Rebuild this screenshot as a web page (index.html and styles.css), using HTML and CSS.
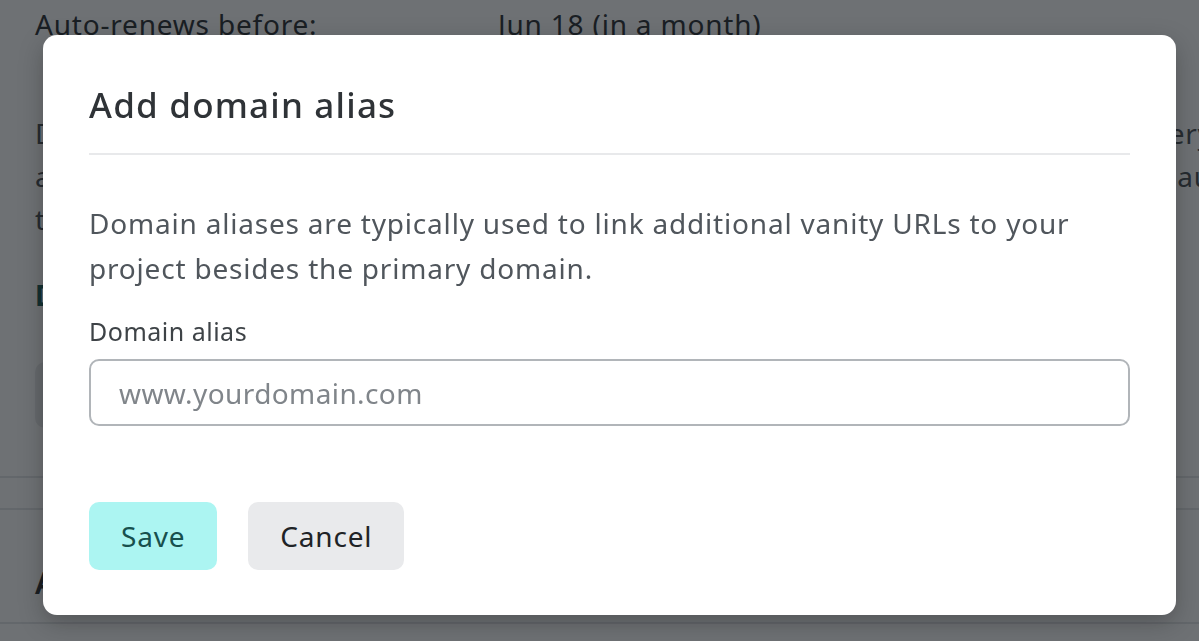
FILE: index.html
```html
<!DOCTYPE html>
<html lang="en">
<head>
    <meta charset="UTF-8">
    <meta name="viewport" content="width=device-width, initial-scale=1.0">
    <title>Add domain alias</title>
    <link rel="stylesheet" href="styles.css">
</head>
<body>
    <main class="page">
        <div class="info-row">
            <span class="info-label">Auto-renews before:</span>
            <span class="info-value">Jun 18 (in a month)</span>
        </div>

        <p class="page-text">
            <span class="page-line">Domain aliases are typically used to link additional vanity URLs to your project. Every alias will get its own certificate</span>
            <span class="page-line">as long as the domain keeps pointing to this project, and certificates get renewed automatically, without any action</span>
            <span class="page-line">to keep the alias secure.</span>
        </p>

        <h3 class="page-heading">Domain aliases</h3>
        <div class="page-box"></div>

        <div class="page-divider"></div>
        <div class="page-divider"></div>

        <h3 class="page-subheading">Advanced</h3>
        <div class="page-divider page-divider-last"></div>
    </main>

    <div class="overlay"></div>

    <!-- Add alias dialog -->
    <div class="modal" role="dialog" aria-labelledby="modal-title">
        <h2 class="modal-title" id="modal-title">Add domain alias</h2>
        <p class="modal-text">
            Domain aliases are typically used to link additional vanity URLs to your<br>
            project besides the primary domain.
        </p>
        <label class="field-label" for="alias">Domain alias</label>
        <input class="field-input" id="alias" type="text" placeholder="www.yourdomain.com">
        <div class="modal-actions">
            <button class="btn btn-primary" type="button">Save</button>
            <button class="btn btn-secondary" type="button">Cancel</button>
        </div>
    </div>
</body>
</html>
```

FILE: styles.css
```css
:root {
    --color-text: #2f3337;
    --color-muted: #50565c;
    --color-border: #b1b5b9;
    --color-accent: #acf5f2;
    --color-accent-text: #17504e;
    --color-neutral: #e9eaec;
}

* {
    box-sizing: border-box;
}

body {
    margin: 0;
    font-family: 'Noto Sans', 'Open Sans', sans-serif;
    letter-spacing: 0.8px;
    background-color: #ffffff;
    color: var(--color-text);
    overflow: hidden;
}

/* Page behind the dialog */
.page {
    padding: 0 0 0 35px;
    margin-top: 2px;
    overflow: hidden;
}

.info-row {
    display: grid;
    grid-template-columns: 463px 1fr;
    font-size: 28px;
    line-height: 44px;
}

.page-text {
    margin: 66px 0 0;
    font-size: 28px;
    line-height: 43px;
    color: #4b5157;
    white-space: nowrap;
    overflow: hidden;
}

.page-line {
    display: block;
}

.page-heading {
    margin: 34px 0 0;
    font-size: 28px;
    line-height: 40px;
    font-weight: 700;
    color: #1d5c59;
}

.page-box {
    margin-top: 47px;
    height: 66px;
    width: 300px;
    border-radius: 10px;
    background-color: #e9eaec;
}

.page-divider {
    margin: 48px 0 0 -35px;
    height: 2px;
    background-color: #e4e6e8;
}

.page-divider + .page-divider {
    margin-top: 30px;
}

.page-divider-last {
    margin-top: 19px;
}

.page-subheading {
    margin: 53px 0 0;
    font-size: 30px;
    line-height: 40px;
    font-weight: 600;
}

.overlay {
    position: fixed;
    inset: 0;
    background-color: rgba(14, 19, 24, 0.6);
}

/* Dialog */
.modal {
    position: fixed;
    left: 43px;
    top: 35px;
    width: 1133px;
    height: 580px;
    padding: 46px 46px 0;
    background-color: #ffffff;
    border-radius: 14px;
    box-shadow: 0 8px 24px rgba(0, 0, 0, 0.25);
    display: flex;
    flex-direction: column;
}

.modal-title {
    margin: 0;
    padding-bottom: 24px;
    border-bottom: 2px solid #e8e9eb;
    font-size: 35px;
    line-height: 48px;
    font-weight: 500;
    letter-spacing: 1.2px;
    color: var(--color-text);
}

.modal-text {
    margin: 46px 0 0;
    font-size: 28px;
    line-height: 45px;
    color: var(--color-muted);
}

.field-label {
    margin-top: 22px;
    font-size: 25px;
    line-height: 36px;
    letter-spacing: 0.5px;
    color: #3e4347;
}

.field-input {
    margin-top: 10px;
    height: 67px;
    padding: 0 28px;
    border: 2px solid var(--color-border);
    border-radius: 10px;
    font-family: inherit;
    font-size: 28px;
    letter-spacing: 0.4px;
    color: var(--color-text);
    outline: none;
}

.field-input::placeholder {
    color: #80858a;
}

.modal-actions {
    display: flex;
    gap: 31px;
    margin-top: 76px;
}

.btn {
    height: 68px;
    padding: 0 32px;
    border: none;
    border-radius: 10px;
    font-family: inherit;
    font-size: 28px;
    letter-spacing: 0.8px;
    cursor: pointer;
}

.btn-primary {
    background-color: var(--color-accent);
    color: var(--color-accent-text);
}

.btn-secondary {
    background-color: var(--color-neutral);
    color: #202326;
}
```
